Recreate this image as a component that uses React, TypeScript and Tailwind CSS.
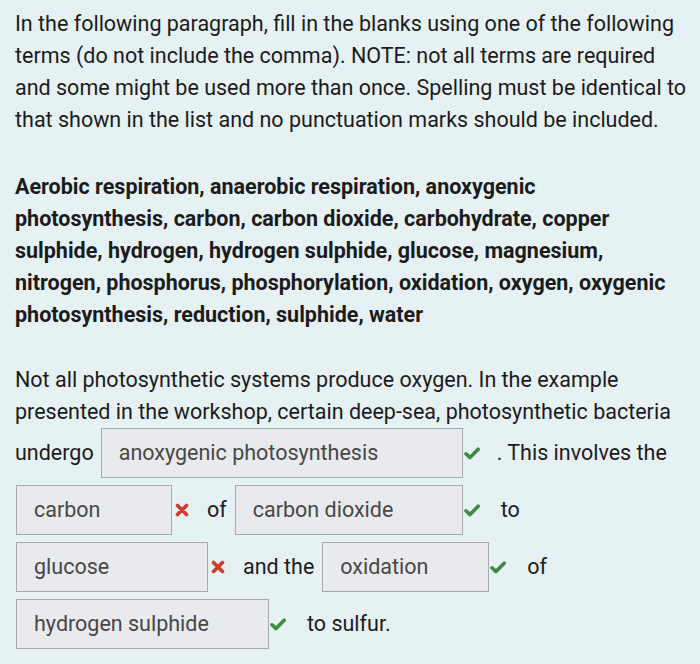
import React from 'react';

const Blank = ({ value, width }: { value: string; width: string }) => (
  <div
    className={`${width} h-[50px] flex items-center pl-[17px] bg-[#e9eaee] border border-[#a7a9ad] text-[#474747] shrink-0`}
  >
    {value}
  </div>
);

const Right = () => (
  <svg width="16" height="13" viewBox="0 0 16 13" className="shrink-0">
    <path
      d="M2 6.8 L6 10.6 L14.2 2.2"
      fill="none"
      stroke="#3d8b40"
      strokeWidth="3.6"
      strokeLinecap="round"
      strokeLinejoin="round"
    />
  </svg>
);

const Wrong = () => (
  <svg width="14" height="14" viewBox="0 0 14 14" className="shrink-0">
    <path
      d="M2.5 2.5 L11.5 11.5 M11.5 2.5 L2.5 11.5"
      fill="none"
      stroke="#d13b2b"
      strokeWidth="3.6"
      strokeLinecap="round"
    />
  </svg>
);

export const App = () => {
  return (
    <div
      className="w-[700px] h-[664px] bg-[#e6f1f4] text-[#1b1b1b] text-[21.5px] leading-[32px] pl-[15px] pt-[8px] whitespace-nowrap"
      style={{ fontFamily: 'Roboto, "Noto Sans", sans-serif' }}
    >
      <p>
        In the following paragraph, fill in the blanks using one of the following
        <br />
        terms (do not include the comma). NOTE: not all terms are required
        <br />
        and some might be used more than once. Spelling must be identical to
        <br />
        that shown in the list and no punctuation marks should be included.
      </p>
      <p className="font-bold mt-[35px]">
        Aerobic respiration, anaerobic respiration, anoxygenic
        <br />
        photosynthesis, carbon, carbon dioxide, carbohydrate, copper
        <br />
        sulphide, hydrogen, hydrogen sulphide, glucose, magnesium,
        <br />
        nitrogen, phosphorus, phosphorylation, oxidation, oxygen, oxygenic
        <br />
        photosynthesis, reduction, sulphide, water
      </p>
      <div className="mt-[33px]">
        <p>
          Not all photosynthetic systems produce oxygen. In the example
          <br />
          presented in the workshop, certain deep-sea, photosynthetic bacteria
        </p>
        <div className="flex flex-col gap-[7px]">
          <div className="flex items-center">
            <span className="mr-[7px]">undergo</span>
            <Blank value="anoxygenic photosynthesis" width="w-[362px]" />
            <span className="ml-[1px]"><Right /></span>
            <span className="ml-[17px]">. This involves the</span>
          </div>
          <div className="flex items-center pl-px">
            <Blank value="carbon" width="w-[156px]" />
            <span className="ml-[3px]"><Wrong /></span>
            <span className="ml-[18px]">of</span>
            <span className="ml-[8px]">
              <Blank value="carbon dioxide" width="w-[228px]" />
            </span>
            <span className="ml-[1px]"><Right /></span>
            <span className="ml-[21px]">to</span>
          </div>
          <div className="flex items-center pl-px">
            <Blank value="glucose" width="w-[192px]" />
            <span className="ml-[3px]"><Wrong /></span>
            <span className="ml-[18px]">and the</span>
            <span className="ml-[8px]">
              <Blank value="oxidation" width="w-[167px]" />
            </span>
            <span className="ml-[1px]"><Right /></span>
            <span className="ml-[21px]">of</span>
          </div>
          <div className="flex items-center pl-px">
            <Blank value="hydrogen sulphide" width="w-[253px]" />
            <span className="ml-[1px]"><Right /></span>
            <span className="ml-[21px]">to sulfur.</span>
          </div>
        </div>
      </div>
    </div>
  );
};

export default App;
